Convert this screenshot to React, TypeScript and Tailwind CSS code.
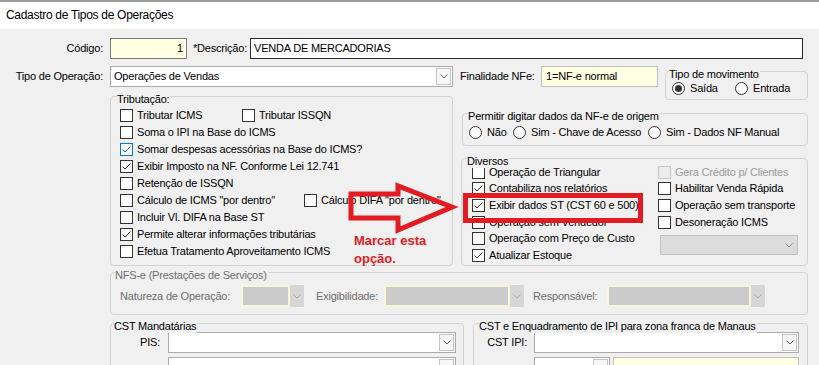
import React from "react"

type CheckProps = {
  label: string
  checked?: boolean
  focus?: boolean
  disabled?: boolean
  className?: string
}

function CheckBox({ checked, focus, disabled }: { checked?: boolean; focus?: boolean; disabled?: boolean }) {
  const box = disabled
    ? "border-[#c6c6c6] bg-[#ececec]"
    : focus
      ? "border-[#0078d7] bg-white"
      : "border-[#333333] bg-white"
  return (
    <span className={`w-[13px] h-[13px] shrink-0 border ${box} flex items-center justify-center`}>
      {checked && (
        <svg width="11" height="11" viewBox="0 0 11 11">
          <polyline
            points="1.5,5.5 4,8 9.5,2.5"
            fill="none"
            stroke={focus ? "#0078d7" : "#333333"}
            strokeWidth="1"
          />
        </svg>
      )}
    </span>
  )
}

function CheckItem({ label, checked, focus, disabled, className = "" }: CheckProps) {
  return (
    <div className={`flex items-center gap-[4px] h-full ${className}`}>
      <CheckBox checked={checked} focus={focus} disabled={disabled} />
      <span className={`whitespace-nowrap ${disabled ? "text-[#9a9a9a]" : ""}`}>{label}</span>
    </div>
  )
}

function Radio({ label, checked, className = "" }: { label: string; checked?: boolean; className?: string }) {
  return (
    <div className={`flex items-center gap-[5px] ${className}`}>
      <span className="w-[13px] h-[13px] shrink-0 rounded-full border border-[#333333] bg-white flex items-center justify-center">
        {checked && <span className="w-[7px] h-[7px] rounded-full bg-[#333333]" />}
      </span>
      <span className="whitespace-nowrap">{label}</span>
    </div>
  )
}

function Chevron({ color = "#606060" }: { color?: string }) {
  return (
    <svg width="8" height="5" viewBox="0 0 8 5">
      <polyline points="0.5,0.5 4,4 7.5,0.5" fill="none" stroke={color} strokeWidth="1" />
    </svg>
  )
}

function Select({ value = "", className = "" }: { value?: string; className?: string }) {
  return (
    <div className={`flex items-stretch h-[21px] bg-white border border-[#acacac] ${className}`}>
      <span className="flex-1 pl-[3px] flex items-center whitespace-nowrap overflow-hidden">{value}</span>
      <span className="w-[15px] m-[1px] border border-[#c4c4c4] bg-[#f7f7f7] flex items-center justify-center">
        <Chevron />
      </span>
    </div>
  )
}

function DisabledSelect({ className = "" }: { className?: string }) {
  return (
    <div className={`flex items-stretch h-[22px] ${className}`}>
      <span className="flex-1 bg-[#cbcbcb] border-2 border-[#f8f8d6]" />
      <span className="w-[14px] bg-[#d6d6d6] flex items-center justify-center">
        <Chevron color="#a8a8a8" />
      </span>
    </div>
  )
}

function Group({
  legend,
  className = "",
  legendLeft = "left-[5px]",
  muted,
  children,
}: {
  legend: string
  className?: string
  legendLeft?: string
  muted?: boolean
  children?: React.ReactNode
}) {
  return (
    <div className={`relative border border-[#d3d3d3] rounded-[4px] ${className}`}>
      <span
        className={`absolute ${legendLeft} top-[-4px] leading-[13px] bg-[#f0f0f0] pr-[1px] whitespace-nowrap ${
          muted ? "text-[#6d6d6d]" : ""
        }`}
      >
        {legend}
      </span>
      {children}
    </div>
  )
}

export default function App() {
  return (
    <div className="relative w-[819px] h-[365px] overflow-hidden bg-[#f0f0f0] text-black text-[11px] leading-[13px] tracking-[-0.2px] font-['Liberation_Sans',Arial,sans-serif]">
      {/* Title */}
      <div className="h-[29px] bg-white border-t-2 border-[#9a9a9a] flex items-center pl-[6px] text-[12px] tracking-[-0.3px]">
        Cadastro de Tipos de Operações
      </div>

      {/* Código / Descrição */}
      <div className="mt-[9px] flex items-center h-[21px]">
        <span className="w-[103px] text-right">Código:</span>
        <div className="ml-[7px] w-[77px] h-[21px] bg-[#ffffe1] border border-[#7a7a7a] flex items-center justify-end pr-[3px]">
          1
        </div>
        <span className="ml-[6px] w-[57px] whitespace-nowrap">*Descrição:</span>
        <div className="w-[553px] h-[21px] bg-white border border-[#2a2a2a] flex items-center pl-[3px]">
          VENDA DE MERCADORIAS
        </div>
      </div>

      <div className="flex mt-[7px]">
        {/* Left column */}
        <div className="w-[453px] shrink-0">
          <div className="flex items-center h-[21px]">
            <span className="w-[103px] text-right whitespace-nowrap">Tipo de Operação:</span>
            <Select className="ml-[7px] w-[343px]" value="Operações de Vendas" />
          </div>

          <Group legend="Tributação:" legendLeft="left-[6px]" className="ml-[110px] mt-[9px] h-[170px]">
            <div className="pt-[10px] pl-[9px] flex flex-col">
              <div className="flex h-[17px]">
                <CheckItem label="Tributar ICMS" className="w-[122px]" />
                <CheckItem label="Tributar ISSQN" />
              </div>
              <div className="h-[17px]">
                <CheckItem label="Soma o IPI na Base do ICMS" />
              </div>
              <div className="h-[17px]">
                <CheckItem label="Somar despesas acessórias na Base do ICMS?" checked focus />
              </div>
              <div className="h-[17px]">
                <CheckItem label="Exibir Imposto na NF. Conforme Lei 12.741" checked />
              </div>
              <div className="h-[17px]">
                <CheckItem label="Retenção de ISSQN" />
              </div>
              <div className="flex h-[17px]">
                <CheckItem label={'Cálculo de ICMS "por dentro"'} className="w-[184px]" />
                <CheckItem label={'Cálculo DIFA "por dentro"'} />
              </div>
              <div className="h-[17px]">
                <CheckItem label="Incluir Vl. DIFA na Base ST" />
              </div>
              <div className="h-[17px]">
                <CheckItem label="Permite alterar informações tributárias" checked />
              </div>
              <div className="h-[17px]">
                <CheckItem label="Efetua Tratamento Aproveitamento ICMS" />
              </div>
            </div>
          </Group>
        </div>

        {/* Right column */}
        <div className="ml-[7px] w-[348px] shrink-0">
          <div className="flex items-start">
            <span className="w-[73px] h-[21px] flex items-center whitespace-nowrap">Finalidade NFe:</span>
            <div className="ml-[8px] w-[117px] h-[21px] bg-[#ffffe1] border border-[#c2c2c2] flex items-center pl-[4px]">
              1=NF-e normal
            </div>
            <Group legend="Tipo de movimento" legendLeft="left-[3px]" className="ml-[7px] mt-[5px] w-[143px] h-[29px]">
              <div className="flex items-center pl-[6px] pt-[10px]">
                <Radio label="Saída" checked className="w-[63px]" />
                <Radio label="Entrada" />
              </div>
            </Group>
          </div>

          <Group legend="Permitir digitar dados da NF-e de origem" className="mt-[13px] ml-[2px] w-[346px] h-[33px]">
            <div className="flex items-center pl-[6px] pt-[12px]">
              <Radio label="Não" className="w-[44px]" />
              <Radio label="Sim - Chave de Acesso" className="w-[135px]" />
              <Radio label="Sim - Dados NF Manual" />
            </div>
          </Group>

          <Group legend="Diversos" className="mt-[12px] ml-[1px] w-[347px] h-[108px]">
            <div className="flex pt-[5px] pl-[10px]">
              <div className="w-[186px] flex flex-col">
                <div className="h-[16.6px]">
                  <CheckItem label="Operação de Triangular" />
                </div>
                <div className="h-[16.6px]">
                  <CheckItem label="Contabiliza nos relatórios" checked />
                </div>
                <div className="h-[16.6px]">
                  <CheckItem label="Exibir dados ST (CST 60 e 500)" checked />
                </div>
                <div className="h-[16.6px]">
                  <CheckItem label="Operação sem Vendedor" />
                </div>
                <div className="h-[16.6px]">
                  <CheckItem label="Operação com Preço de Custo" />
                </div>
                <div className="h-[16.6px]">
                  <CheckItem label="Atualizar Estoque" checked />
                </div>
              </div>
              <div className="flex flex-col">
                <div className="h-[16.6px]">
                  <CheckItem label="Gera Crédito p/ Clientes" disabled />
                </div>
                <div className="h-[16.6px]">
                  <CheckItem label="Habilitar Venda Rápida" />
                </div>
                <div className="h-[16.6px]">
                  <CheckItem label="Operação sem transporte" />
                </div>
                <div className="h-[16.6px]">
                  <CheckItem label="Desoneração ICMS" />
                </div>
                <div className="mt-[5px] ml-[2px] w-[138px] h-[20px] bg-[#dcdcdc] border border-[#c2c2c2] flex items-center justify-end pr-[4px]">
                  <Chevron color="#8a8a8a" />
                </div>
              </div>
            </div>
          </Group>
        </div>
      </div>

      {/* NFS-e */}
      <Group legend="NFS-e (Prestações de Serviços)" muted legendLeft="left-[4px]" className="ml-[110px] mt-[6px] w-[698px] h-[43px]">
        <div className="flex items-center pl-[9px] pt-[12px] text-[#6d6d6d]">
          <span className="w-[121px] whitespace-nowrap">Natureza de Operação:</span>
          <DisabledSelect className="w-[63px]" />
          <span className="ml-[12px] w-[68px]">Exigibilidade:</span>
          <DisabledSelect className="w-[140px]" />
          <span className="ml-[9px] w-[74px]">Responsável:</span>
          <DisabledSelect className="w-[158px]" />
        </div>
      </Group>

      {/* CST groups */}
      <div className="flex mt-[8px]">
        <Group legend="CST Mandatárias" legendLeft="left-[3px]" className="ml-[110px] w-[354px] h-[70px]">
          <div className="pt-[8px] flex flex-col gap-[4px]">
            <div className="flex items-center">
              <span className="w-[49px] text-right">PIS:</span>
              <Select className="ml-[8px] w-[288px]" />
            </div>
            <div className="flex items-center">
              <span className="w-[49px]" />
              <Select className="ml-[8px] w-[288px]" />
            </div>
          </div>
        </Group>
        <Group legend="CST e Enquadramento de IPI para zona franca de Manaus" className="ml-[9px] w-[335px] h-[70px]">
          <div className="pt-[8px] flex flex-col gap-[4px]">
            <div className="flex items-center">
              <span className="w-[53px] text-right">CST IPI:</span>
              <Select className="ml-[7px] w-[265px]" />
            </div>
            <div className="flex items-center">
              <span className="w-[53px]" />
              <Select className="ml-[7px] w-[76px]" />
              <div className="ml-[3px] w-[186px] h-[21px] bg-[#ffffe1] border border-[#c2c2c2]" />
            </div>
          </div>
        </Group>
      </div>

      {/* Annotation overlays */}
      <svg className="absolute left-0 top-0 pointer-events-none" width="819" height="365" viewBox="0 0 819 365">
        <polygon
          points="351,194 398,194 398,186 452,207 398,230 398,218 351,218"
          fill="none"
          stroke="#e31b23"
          strokeWidth="5"
          strokeLinejoin="miter"
        />
      </svg>
      <div className="absolute left-[463px] top-[193px] w-[180px] h-[30px] border-[5px] border-[#e31b23] pointer-events-none" />
      <div className="absolute left-[354px] top-[232px] text-[13px] leading-[18px] font-bold tracking-normal text-[#e0201f] pointer-events-none">
        Marcar esta
        <br />
        opção.
      </div>
    </div>
  )
}
